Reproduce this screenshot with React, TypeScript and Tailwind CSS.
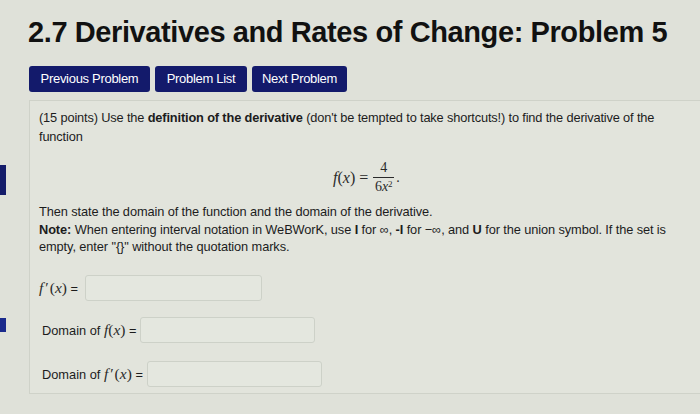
import React from "react";

const sans = { fontFamily: '"Liberation Sans", Arial, Helvetica, sans-serif' };
const serif = { fontFamily: '"Liberation Serif", "Times New Roman", serif' };

function Fx({ prime = false }: { prime?: boolean }) {
  return (
    <span className="italic text-[15.5px] text-[#2a2a2a]" style={serif}>
      f{prime ? <span className="not-italic pl-[2px] pr-[1px]">′</span> : null}
      <span className="not-italic">(</span>x<span className="not-italic">)</span>
    </span>
  );
}

function Field({ w }: { w: string }) {
  return (
    <div className={`h-[26px] ${w} rounded-[3px] border border-[#cdd1c8] bg-[#e4e7df]`} />
  );
}

export default function App() {
  return (
    <div className="relative w-[700px] h-[414px] overflow-hidden bg-[#dfe1d9] text-[#1c1c1c]" style={sans}>
      <div className="absolute left-0 top-[165px] w-[6px] h-[30px] bg-[#141c6a]" />
      <div className="absolute left-0 top-[318px] w-[6px] h-[14px] bg-[#1a2a8c]" />

      <div className="pl-[28px] pt-[16px]">
        <h1 className="text-[29px] leading-[33px] font-bold tracking-[-0.4px] text-[#111]">
          2.7 Derivatives and Rates of Change: Problem 5
        </h1>

        <div className="mt-[17px] flex gap-[5px] pl-[1px]">
          <button className="h-[26px] w-[121px] rounded-[3px] bg-[#131a6b] text-white text-[13px] tracking-[-0.3px]">
            Previous Problem
          </button>
          <button className="h-[26px] w-[92px] rounded-[3px] bg-[#131a6b] text-white text-[13px] tracking-[-0.3px]">
            Problem List
          </button>
          <button className="h-[26px] w-[95px] rounded-[3px] bg-[#131a6b] text-white text-[13px] tracking-[-0.3px]">
            Next Problem
          </button>
        </div>

        <div className="mt-[8px] ml-[1px] w-[700px] h-[294px] border-t border-l border-b border-[#cfd2c9] bg-[#e2e4dc] pl-[9px] pt-[7px]">
          <p className="text-[12.8px] leading-[19px] tracking-[-0.15px] whitespace-nowrap">
            (15 points) Use the <b>definition of the derivative</b> (don't be tempted to take shortcuts!) to find the derivative of the
            <br />
            function
          </p>

          <div className="mt-[15px] flex items-center pl-[294px] text-[#2a2a2a]" style={serif}>
            <span className="italic text-[16px]">
              f<span className="not-italic">(</span>x<span className="not-italic">)</span>
            </span>
            <span className="ml-[4px] mr-[5px] text-[16px]">=</span>
            <span className="flex flex-col items-center text-[14px] leading-[14px]">
              <span className="px-[2px]">4</span>
              <span className="my-[2px] h-[1px] w-[21px] bg-[#2a2a2a]" />
              <span>
                6<span className="italic">x</span>
                <sup className="text-[9px]">2</sup>
              </span>
            </span>
            <span className="ml-[2px] text-[14px]">.</span>
          </div>

          <p className="mt-[9px] text-[12.8px] leading-[17.5px] tracking-[-0.1px] whitespace-nowrap">
            Then state the domain of the function and the domain of the derivative.
            <br />
            <b>Note:</b> When entering interval notation in WeBWorK, use <b>I</b> for ∞, <b>-I</b> for −∞, and <b>U</b> for the union symbol. If the set is
            <br />
            empty, enter "{"{}"}" without the quotation marks.
          </p>

          <div className="mt-[19px] flex items-center gap-[7px]">
            <span className="text-[12.8px] whitespace-nowrap">
              <Fx prime /> =
            </span>
            <Field w="w-[177px]" />
          </div>

          <div className="mt-[16px] flex items-center gap-[4px] pl-[3px]">
            <span className="text-[12.8px] whitespace-nowrap">
              Domain of <Fx /> =
            </span>
            <Field w="w-[175px]" />
          </div>

          <div className="mt-[18px] flex items-center gap-[4px] pl-[3px]">
            <span className="text-[12.8px] whitespace-nowrap">
              Domain of <Fx prime /> =
            </span>
            <Field w="w-[175px]" />
          </div>
        </div>
      </div>
    </div>
  );
}
